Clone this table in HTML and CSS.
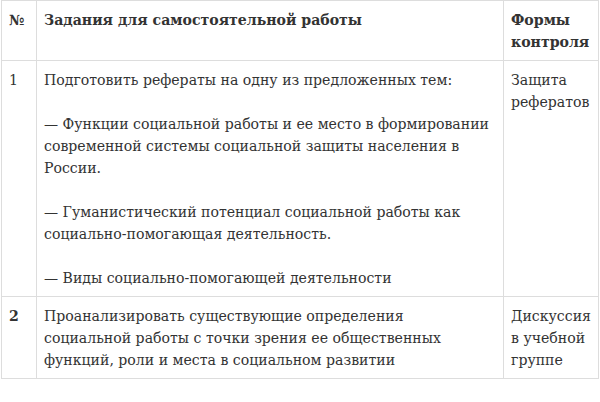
FILE: index.html
```html
<!DOCTYPE html>
<html lang="ru">
<head>
<meta charset="utf-8">
<link rel="stylesheet" href="styles.css">
</head>
<body>
<div class="wrap">
<table class="tasks">
  <colgroup>
    <col class="c-num">
    <col class="c-task">
    <col class="c-form">
  </colgroup>
  <thead>
    <tr>
      <th>№</th>
      <th class="task">Задания для самостоятельной работы</th>
      <th>Формы контроля</th>
    </tr>
  </thead>
  <tbody>
    <tr>
      <td>1</td>
      <td class="task">
        <p>Подготовить рефераты на одну из предложенных тем:</p>
        <p>— Функции социальной работы и ее место в формировании современной системы социальной защиты населения в России.</p>
        <p>— Гуманистический потенциал социальной работы как социально-помогающая деятельность.</p>
        <p>— Виды социально-помогающей деятельности</p>
      </td>
      <td>Защита рефератов</td>
    </tr>
    <tr>
      <td class="bold">2</td>
      <td class="task">Проанализировать существующие определения социальной работы с точки зрения ее общественных функций, роли и места в социальном развитии</td>
      <td>Дискуссия в учебной группе</td>
    </tr>
  </tbody>
</table>
</div>
</body>
</html>
```

FILE: styles.css
```css
html, body {
  margin: 0;
  padding: 0;
  background: #fff;
}
.wrap {
  padding: 0 0 0 1px;
}
.tasks {
  border-collapse: collapse;
  table-layout: fixed;
  width: 598px;
  font-family: "DejaVu Serif", serif;
  font-size: 14.1px;
  line-height: 22px;
  color: #333;
}
.c-num { width: 35px; }
.c-task { width: 467px; }
.c-form { width: 95px; }
.tasks th, .tasks td {
  border: 1px solid #ddd;
  padding: 8px 7px 7px 7px;
  text-align: left;
  vertical-align: top;
}
.tasks .task {
  padding-right: 9px;
}
.tasks th {
  font-weight: bold;
}
.tasks td.bold {
  font-weight: bold;
}
.tasks p {
  margin: 0 0 22px 0;
}
.tasks p:last-child {
  margin-bottom: 0;
}
```
